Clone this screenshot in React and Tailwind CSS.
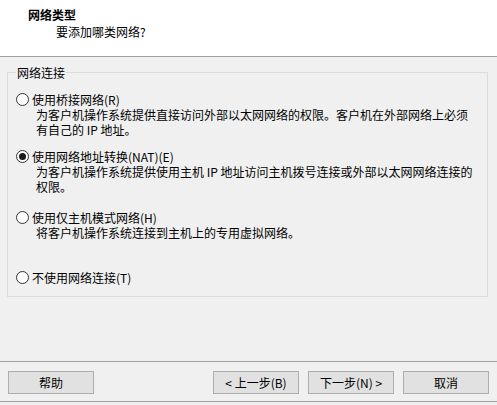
import React from 'react';

const font = { fontFamily: '"Microsoft YaHei", "Noto Sans CJK SC", "Noto Sans", sans-serif' };

const Radio = ({ checked }) => (
  <svg width="13" height="13" viewBox="0 0 13 13" className="shrink-0">
    <circle cx="6.5" cy="6.5" r="6" fill="#ffffff" stroke="#333333" strokeWidth="1" />
    {checked && <circle cx="6.5" cy="6.5" r="3.5" fill="#1a1a1a" />}
  </svg>
);

const Option = ({ checked, label, lines, className }) => (
  <div className={className}>
    <div className="flex items-center h-[15px]">
      <Radio checked={checked} />
      <span className="ml-[3px]">{label}</span>
    </div>
    {lines.map((l, i) => (
      <div key={i} className="pl-[20px] h-[15px] leading-[15px] whitespace-nowrap">
        {l}
      </div>
    ))}
  </div>
);

const Button = ({ children, className }) => (
  <button className={`w-[86px] h-[23px] bg-[#e1e1e1] border border-[#adadad] text-[12px] leading-none text-black ${className || ''}`}>
    {children}
  </button>
);

export default function App() {
  return (
    <div className="w-[497px] h-[405px] bg-[#f0f0f0] flex flex-col text-[12px] leading-[15px] text-black" style={font}>
      {/* Header */}
      <div className="h-[57px] bg-white border-b border-[#a0a0a0] pt-[7px] shrink-0">
        <div className="pl-[28px] font-bold">网络类型</div>
        <div className="pl-[56px] mt-[2px]">要添加哪类网络?</div>
      </div>

      {/* Group box */}
      <fieldset className="ml-[7px] mr-[9px] mt-[8px] border border-[#dcdcdc] pl-[8px] pt-[12px] pb-[11px]">
        <legend className="px-[1px]">网络连接</legend>
        <Option
          checked={false}
          label="使用桥接网络(R)"
          lines={['为客户机操作系统提供直接访问外部以太网网络的权限。客户机在外部网络上必须', '有自己的 IP 地址。']}
        />
        <Option
          className="mt-[12px]"
          checked={true}
          label="使用网络地址转换(NAT)(E)"
          lines={['为客户机操作系统提供使用主机 IP 地址访问主机拨号连接或外部以太网网络连接的', '权限。']}
        />
        <Option
          className="mt-[16px]"
          checked={false}
          label="使用仅主机模式网络(H)"
          lines={['将客户机操作系统连接到主机上的专用虚拟网络。']}
        />
        <Option className="mt-[30px]" checked={false} label="不使用网络连接(T)" lines={[]} />
      </fieldset>

      {/* Footer */}
      <div className="mt-auto mb-[3px] border-t border-b border-[#a0a0a0] pt-[9px] pb-[7px] px-[8px] flex items-center">
        <Button>帮助</Button>
        <div className="flex-1" />
        <Button>&lt; 上一步(B)</Button>
        <Button className="ml-[9px]">下一步(N) &gt;</Button>
        <Button className="ml-[9px]">取消</Button>
      </div>
    </div>
  );
}
